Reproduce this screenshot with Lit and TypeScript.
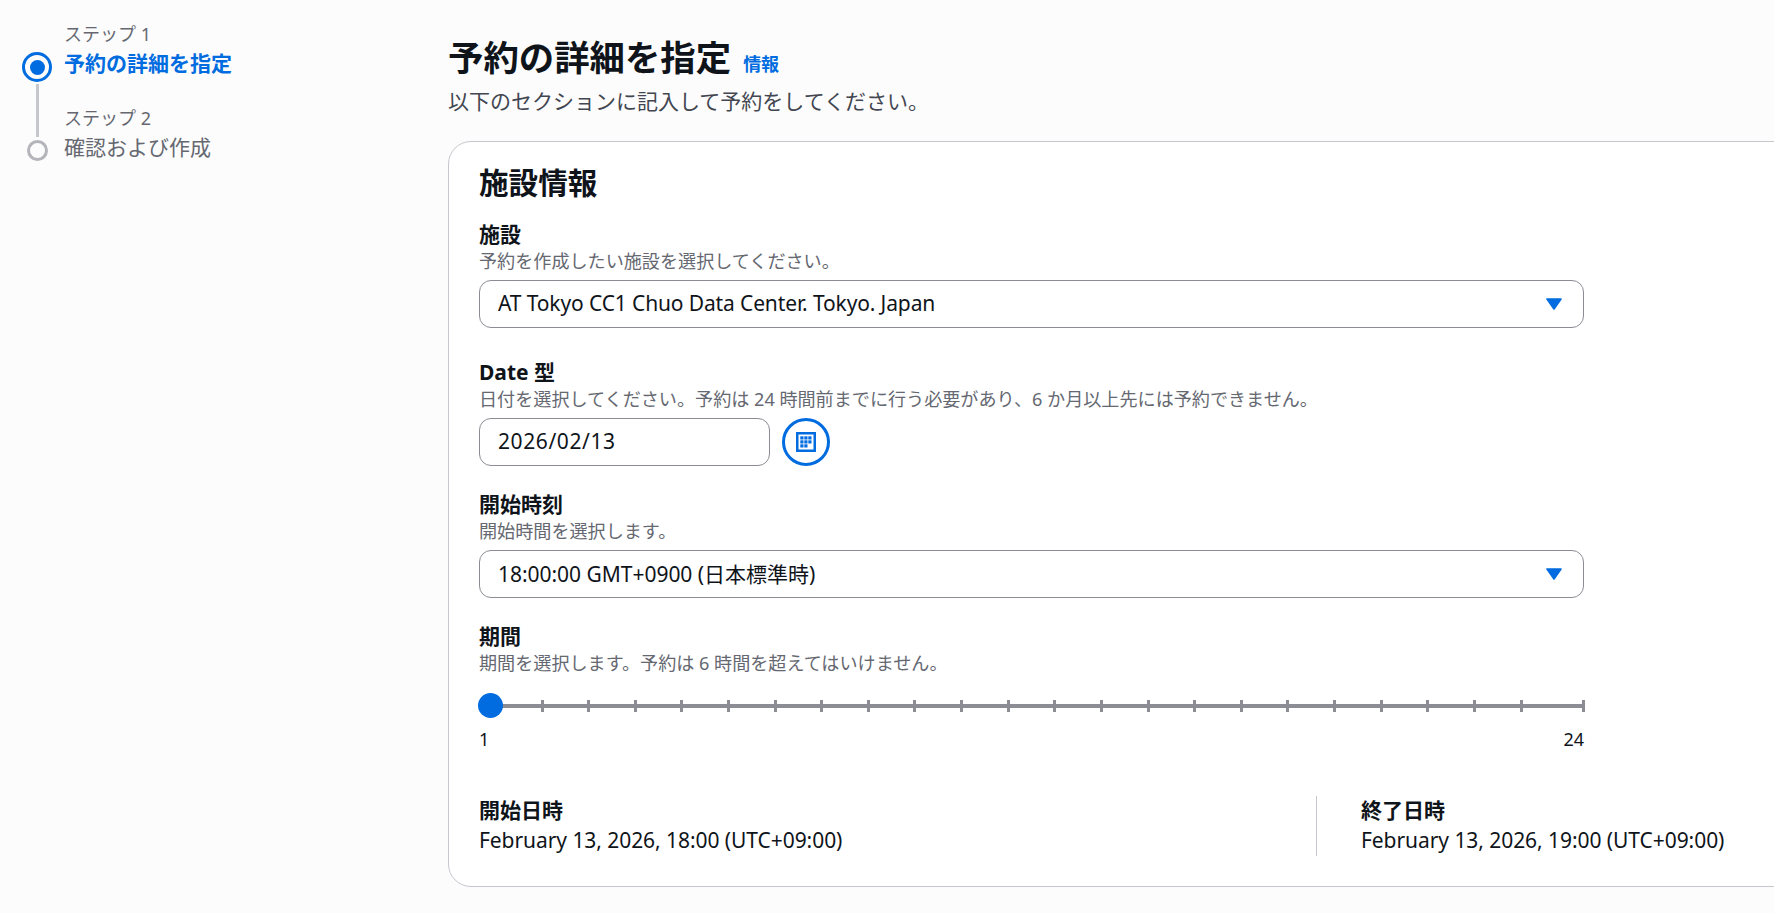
import { LitElement, html, css, svg } from "lit";
import { customElement } from "lit/decorators.js";

const TICK_START = 61.5;
const TICK_STEP = 46.62;
const ticks = [...Array.from({ length: 22 }, (_, i) => TICK_START + TICK_STEP * i), 1102.5];

const caret = html`<svg class="caret" viewBox="0 0 16 12" aria-hidden="true"><path d="M1 1h14L8 11z" fill="#006ce0" stroke="#006ce0" stroke-width="1.6" stroke-linejoin="round"/></svg>`;

const calCells = [[0,0],[1,0],[2,0],[0,1],[1,1],[2,1],[0,2],[1,2]];
const calendar = html`<svg class="cal" viewBox="0 0 20 20" aria-hidden="true">
  <rect x="1.25" y="1.25" width="17.5" height="17.5" fill="none" stroke="#006ce0" stroke-width="2.5"/>
  ${calCells.map(([c, r]) => svg`<rect x="${4.3 + c * 4}" y="${4.3 + r * 4}" width="3.2" height="3.2" fill="#006ce0"/>`)}
</svg>`;

@customElement("app-root")
export class AppRoot extends LitElement {
  static styles = css`
    :host {
      display: flex;
      width: 100vw;
      height: 913px;
      overflow: hidden;
      background: #fcfcfc;
      color: #0f141a;
      font-family: "Noto Sans", "Noto Sans CJK JP", sans-serif;
      font-size: 21px;
    }
    .nav {
      flex: 0 0 448px;
      box-sizing: border-box;
      padding: 22px 0 0 22px;
      display: grid;
      grid-template-columns: 30px 1fr;
      column-gap: 12px;
      grid-template-rows: 30px 29px 25px 30px 29px;
      align-content: start;
    }
    .step-label {
      grid-column: 2;
      font-size: 18px;
      line-height: 24px;
      color: #656871;
    }
    .l1 { grid-row: 1; }
    .l2 { grid-row: 4; }
    .step-title {
      grid-column: 2;
      line-height: 23px;
      color: #656871;
    }
    .t1 { grid-row: 2; color: #006ce0; font-weight: 700; }
    .t2 { grid-row: 5; }
    .dot-on {
      grid-column: 1;
      grid-row: 2;
      box-sizing: border-box;
      width: 30px;
      height: 30px;
      border: 3.5px solid #006ce0;
      border-radius: 50%;
      display: flex;
      align-items: center;
      justify-content: center;
    }
    .dot-on::after {
      content: "";
      width: 15px;
      height: 15px;
      border-radius: 50%;
      background: #006ce0;
    }
    .line {
      grid-column: 1;
      grid-row: 3 / 5;
      justify-self: center;
      width: 3px;
      margin: 3px 0 -1px;
      background: #c6c6cd;
    }
    .dot-off {
      grid-column: 1;
      grid-row: 5;
      justify-self: center;
      align-self: center;
      box-sizing: border-box;
      width: 21px;
      height: 21px;
      border: 3.5px solid #b4b4bb;
      border-radius: 50%;
    }
    .main {
      flex: 0 0 auto;
      padding-top: 37px;
    }
    .head {
      display: flex;
      align-items: baseline;
      gap: 12px;
    }
    h1 {
      margin: 0;
      font-size: 35.4px;
      line-height: 40px;
      font-weight: 700;
    }
    .info {
      font-size: 18px;
      font-weight: 700;
      color: #006ce0;
    }
    .sub {
      margin: 10px 0 25px;
      line-height: 29px;
      color: #424650;
    }
    .card {
      box-sizing: border-box;
      width: 1500px;
      height: 746px;
      background: #fff;
      border: 1px solid #c6c6cd;
      border-radius: 23px;
      padding: 23px 0 0 30px;
    }
    h2 {
      margin: 0 0 19px;
      font-size: 29.6px;
      line-height: 36px;
      font-weight: 700;
    }
    .field { width: 1105px; }
    .field + .field { margin-top: 24px; }
    .gap-lg { margin-top: 30px !important; }
    .label {
      font-weight: 700;
      line-height: 28px;
      margin-bottom: 1px;
    }
    .desc {
      font-size: 18.1px;
      line-height: 24px;
      color: #656871;
      margin-bottom: 7px;
    }
    .box {
      box-sizing: border-box;
      height: 48px;
      border: 1.5px solid #8c8c94;
      border-radius: 12px;
      background: #fff;
      padding: 0 18px 2px;
      display: flex;
      align-items: center;
      justify-content: space-between;
    }
    .fac { letter-spacing: -0.13px; }
    .clock { letter-spacing: -0.03px; }
    .caret { width: 16px; height: 12px; margin: 2px 3px 0 0; }
    .date-row {
      display: flex;
      align-items: center;
      gap: 12px;
    }
    .date { width: 291px; letter-spacing: 0.6px; }
    .icon-btn {
      box-sizing: border-box;
      width: 48px;
      height: 48px;
      border: 3px solid #006ce0;
      border-radius: 50%;
      background: #fff;
      padding: 0;
      display: flex;
      align-items: center;
      justify-content: center;
    }
    .cal { width: 20px; height: 20px; }
    .slider {
      position: relative;
      height: 25px;
      margin-top: 18px;
    }
    .track {
      position: absolute;
      left: 0;
      right: 0;
      top: 11px;
      height: 3.5px;
      background: #8c8c94;
    }
    .tick {
      position: absolute;
      top: 7px;
      width: 3px;
      height: 12px;
      background: #8c8c94;
    }
    .thumb {
      position: absolute;
      left: -1px;
      top: 0;
      width: 25px;
      height: 25px;
      border-radius: 50%;
      background: #006ce0;
    }
    .ends {
      display: flex;
      justify-content: space-between;
      font-size: 18px;
      line-height: 24px;
      margin-top: 9px;
    }
    .times {
      display: grid;
      grid-template-columns: 837px 1fr;
      margin-top: 45px;
      height: 60px;
    }
    .time-end {
      border-left: 1px solid #c6c6cd;
      padding-left: 44px;
    }
    .value { line-height: 31px; letter-spacing: -0.06px; }
  `;

  render() {
    return html`
      <nav class="nav">
        <div class="step-label l1">ステップ 1</div>
        <div class="dot-on"></div>
        <div class="step-title t1">予約の詳細を指定</div>
        <div class="line"></div>
        <div class="step-label l2">ステップ 2</div>
        <div class="dot-off"></div>
        <div class="step-title t2">確認および作成</div>
      </nav>
      <main class="main">
        <div class="head"><h1>予約の詳細を指定</h1><a class="info">情報</a></div>
        <p class="sub">以下のセクションに記入して予約をしてください。</p>
        <section class="card">
          <h2>施設情報</h2>
          <div class="field">
            <div class="label">施設</div>
            <div class="desc">予約を作成したい施設を選択してください。</div>
            <div class="box"><span class="fac">AT Tokyo CC1 Chuo Data Center. Tokyo. Japan</span>${caret}</div>
          </div>
          <div class="field gap-lg">
            <div class="label">Date 型</div>
            <div class="desc">日付を選択してください。予約は 24 時間前までに行う必要があり、6 か月以上先には予約できません。</div>
            <div class="date-row">
              <div class="box date">2026/02/13</div>
              <button class="icon-btn">${calendar}</button>
            </div>
          </div>
          <div class="field">
            <div class="label">開始時刻</div>
            <div class="desc">開始時間を選択します。</div>
            <div class="box"><span class="clock">18:00:00 GMT+0900 (日本標準時)</span>${caret}</div>
          </div>
          <div class="field">
            <div class="label">期間</div>
            <div class="desc">期間を選択します。予約は 6 時間を超えてはいけません。</div>
            <div class="slider">
              <div class="track"></div>
              ${ticks.map((x) => html`<div class="tick" style="left:${x}px"></div>`)}
              <div class="thumb"></div>
            </div>
            <div class="ends"><span>1</span><span>24</span></div>
          </div>
          <div class="times">
            <div>
              <div class="label">開始日時</div>
              <div class="value">February 13, 2026, 18:00 (UTC+09:00)</div>
            </div>
            <div class="time-end">
              <div class="label">終了日時</div>
              <div class="value">February 13, 2026, 19:00 (UTC+09:00)</div>
            </div>
          </div>
        </section>
      </main>
    `;
  }
}
